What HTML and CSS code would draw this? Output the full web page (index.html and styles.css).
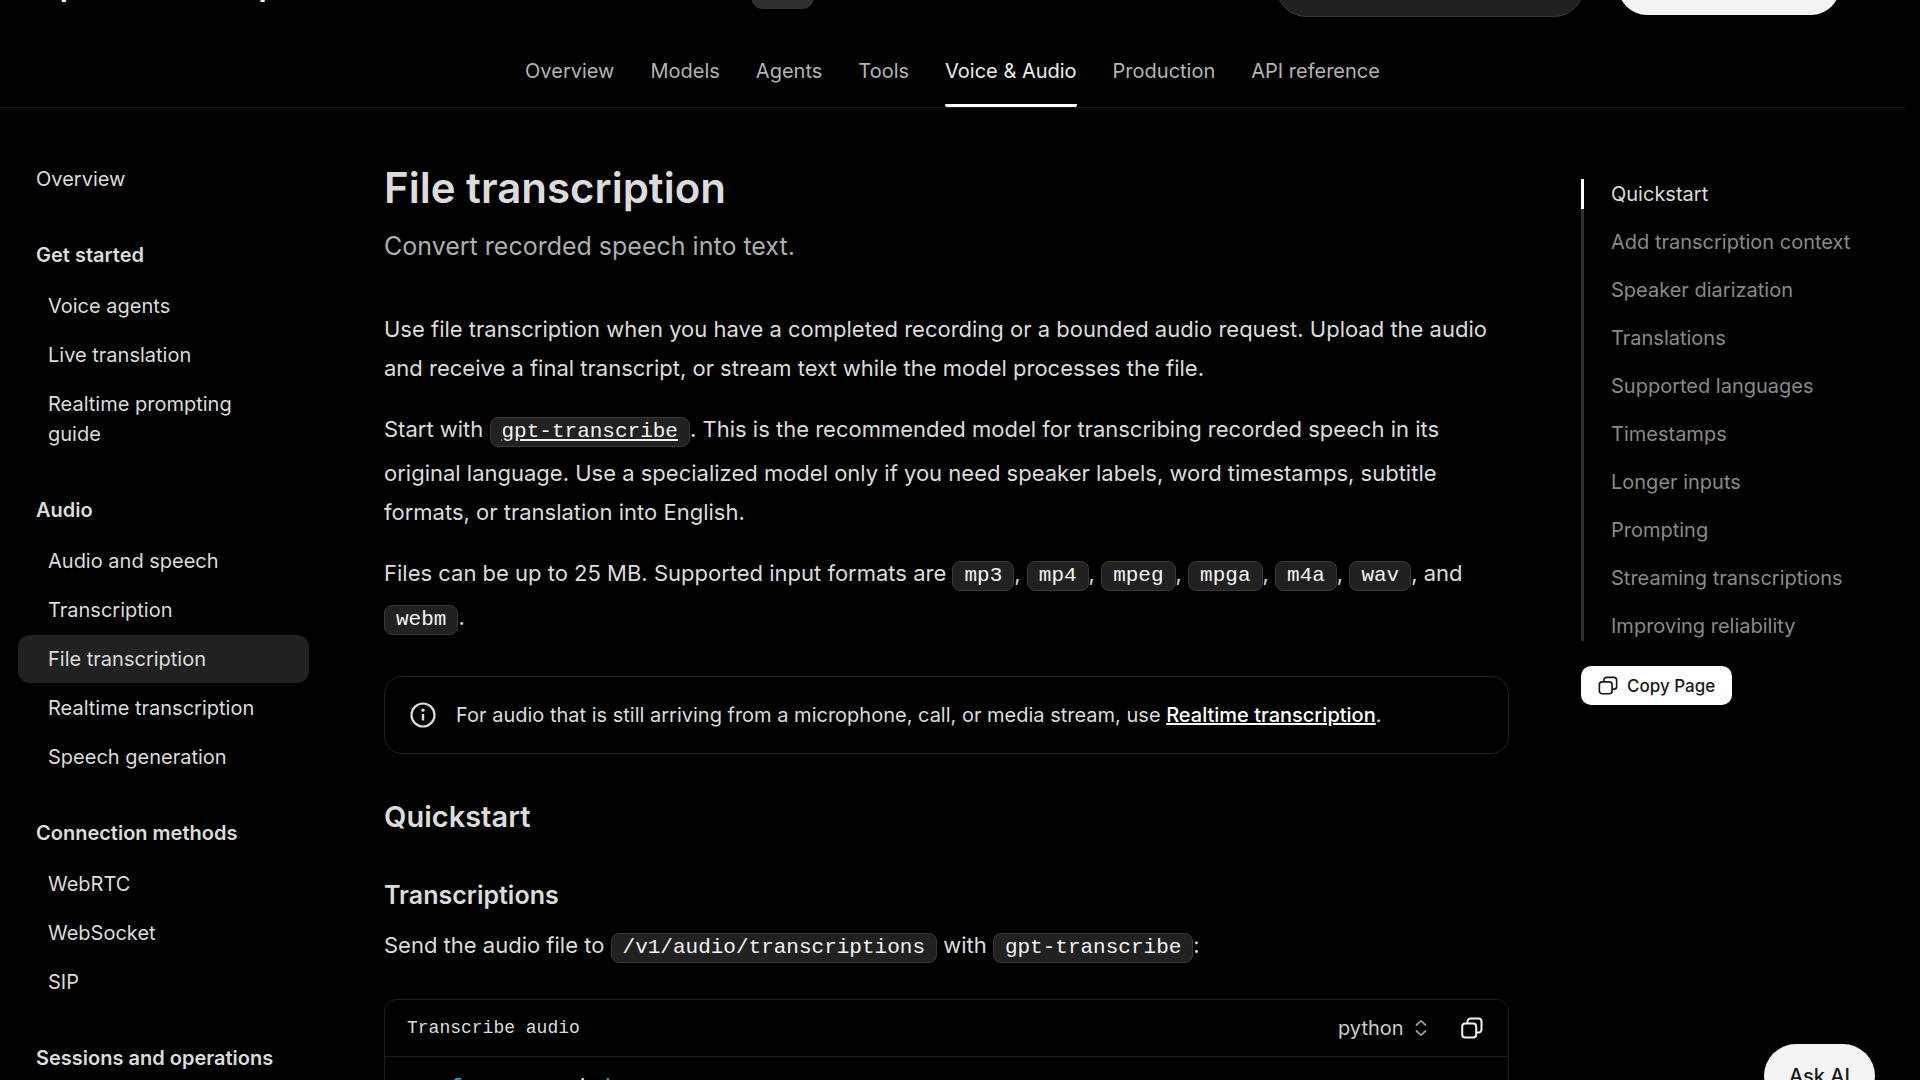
FILE: index.html
```html
<!DOCTYPE html>
<html lang="en">
<head>
    <meta charset="utf-8">
    <title>File transcription</title>
    <link rel="stylesheet" href="styles.css">
</head>
<body>
    <header>
        <div class="topbar">
            <a href="#" class="brand">OpenAI Developers</a>
            <button class="menu-btn" aria-label="Menu"></button>
            <button class="search-btn" aria-label="Search"></button>
            <button class="dashboard-btn" aria-label="Dashboard"></button>
        </div>
        <nav class="navigation">
            <a href="#">Overview</a>
            <a href="#">Models</a>
            <a href="#">Agents</a>
            <a href="#">Tools</a>
            <a href="#" class="active">Voice &amp; Audio</a>
            <a href="#">Production</a>
            <a href="#">API reference</a>
        </nav>
    </header>

    <div class="container">
        <aside class="sidebar">
            <a href="#" class="top-link">Overview</a>

            <h4>Get started</h4>
            <ul>
                <li><a href="#">Voice agents</a></li>
                <li><a href="#">Live translation</a></li>
                <li><a href="#">Realtime prompting guide</a></li>
            </ul>

            <h4>Audio</h4>
            <ul>
                <li><a href="#">Audio and speech</a></li>
                <li><a href="#">Transcription</a></li>
                <li><a href="#" class="active">File transcription</a></li>
                <li><a href="#">Realtime transcription</a></li>
                <li><a href="#">Speech generation</a></li>
            </ul>

            <h4>Connection methods</h4>
            <ul>
                <li><a href="#">WebRTC</a></li>
                <li><a href="#">WebSocket</a></li>
                <li><a href="#">SIP</a></li>
            </ul>

            <h4>Sessions and operations</h4>
        </aside>

        <main class="content">
            <h1>File transcription</h1>
            <p class="subtitle">Convert recorded speech into text.</p>

            <p>Use file transcription when you have a completed recording or a bounded audio request. Upload the audio and receive a final transcript, or stream text while the model processes the file.</p>
            <p>Start with <a href="#"><code>gpt-transcribe</code></a>. This is the recommended model for transcribing recorded speech in its original language. Use a specialized model only if you need speaker labels, word timestamps, subtitle formats, or translation into English.</p>
            <p>Files can be up to 25 MB. Supported input formats are <code>mp3</code>, <code>mp4</code>, <code>mpeg</code>, <code>mpga</code>, <code>m4a</code>, <code>wav</code>, and <code>webm</code>.</p>

            <div class="callout">
                <svg width="26" height="26" viewBox="0 0 26 26" fill="none" stroke="currentColor" stroke-width="2.2">
                    <circle cx="13" cy="13" r="11.5"/>
                    <path d="M13 12v6.5" stroke-width="2.4"/>
                    <circle cx="13" cy="8.2" r="1.6" fill="currentColor" stroke="none"/>
                </svg>
                <span>For audio that is still arriving from a microphone, call, or media stream, use <a href="#">Realtime transcription</a>.</span>
            </div>

            <h2>Quickstart</h2>
            <h3>Transcriptions</h3>
            <p>Send the audio file to <code>/v1/audio/transcriptions</code> with <code>gpt-transcribe</code>:</p>

            <div class="code-box">
                <div class="code-header">
                    <span class="code-title">Transcribe audio</span>
                    <div class="language">
                        <select aria-label="Language">
                            <option>python</option>
                        </select>
                        <svg width="12" height="18" viewBox="0 0 12 18" fill="none" stroke="currentColor" stroke-width="1.8" stroke-linecap="round" stroke-linejoin="round">
                            <path d="M1.5 6 6 1.8 10.5 6M1.5 12 6 16.2 10.5 12"/>
                        </svg>
                    </div>
                    <button class="copy-btn" aria-label="Copy code">
                        <svg width="22" height="22" viewBox="0 0 22 22" fill="none" stroke="currentColor" stroke-width="2">
                            <rect x="1.2" y="6.5" width="14" height="14" rx="3"/>
                            <path d="M6.5 6.5V4.5a3 3 0 0 1 3-3h8a3 3 0 0 1 3 3v8a3 3 0 0 1-3 3h-2"/>
                        </svg>
                    </button>
                </div>
                <pre><span class="keyword">from</span> openai <span class="keyword">import</span> <span class="name">OpenAI</span></pre>
            </div>
        </main>

        <aside class="toc">
            <ul>
                <li class="active"><a href="#">Quickstart</a></li>
                <li><a href="#">Add transcription context</a></li>
                <li><a href="#">Speaker diarization</a></li>
                <li><a href="#">Translations</a></li>
                <li><a href="#">Supported languages</a></li>
                <li><a href="#">Timestamps</a></li>
                <li><a href="#">Longer inputs</a></li>
                <li><a href="#">Prompting</a></li>
                <li><a href="#">Streaming transcriptions</a></li>
                <li><a href="#">Improving reliability</a></li>
            </ul>
            <button class="copy-page">
                <svg width="20" height="20" viewBox="0 0 22 22" fill="none" stroke="currentColor" stroke-width="1.8">
                    <rect x="1.5" y="6.5" width="14" height="13" rx="3"/>
                    <path d="M6.5 6.5V4.5a3 3 0 0 1 3-3h8a3 3 0 0 1 3 3v7a3 3 0 0 1-3 3h-2"/>
                </svg>
                Copy Page
            </button>
        </aside>
    </div>

    <button class="ask-ai">Ask AI</button>
</body>
</html>
```
FILE: styles.css
```css
* {
    box-sizing: border-box;
}

body {
    background-color: #000;
    color: #dcdcdc;
    font-family: Inter, "Liberation Sans", sans-serif;
    font-size: 20px;
    line-height: 30px;
    margin: 0 15px 0 0;
    height: 100vh;
    overflow: hidden;
}

a {
    color: inherit;
    text-decoration: none;
}

ul {
    list-style: none;
    margin: 0;
    padding: 0;
}

button {
    border: none;
    font-family: inherit;
    cursor: pointer;
}

/* header */
header {
    border-bottom: 1px solid #1c1c1c;
}

.topbar {
    display: grid;
    grid-template-columns: 8fr 63px 9fr 222px;
    align-items: end;
    height: 67px;
    margin-top: -50px;
    padding: 0 65px 0 36px;
}

.brand {
    font-size: 31px;
    font-weight: 600;
    line-height: 36px;
    color: #fff;
    margin-bottom: 14px;
}

.menu-btn {
    height: 40px;
    border-radius: 12px;
    background-color: #303030;
    margin-bottom: 8px;
}

.search-btn {
    width: 308px;
    height: 60px;
    justify-self: end;
    margin-right: 34px;
    border-radius: 30px;
    background-color: #212121;
    border: 1px solid #383838;
}

.dashboard-btn {
    height: 58px;
    border-radius: 29px;
    background-color: #f3f3f3;
    margin-bottom: 2px;
}

.navigation {
    display: flex;
    justify-content: center;
    gap: 36px;
    padding-top: 39px;
}

.navigation a {
    color: #b4b4b4;
    padding-bottom: 18px;
    border-bottom: 3px solid transparent;
}

.navigation a.active {
    color: #ededed;
    border-bottom-color: #fff;
    border-radius: 2px;
}

.container {
    display: grid;
    grid-template-columns: 294px minmax(0, 1fr) 306px;
    column-gap: 72px;
    padding: 0 18px;
}

/* left menu */
.sidebar {
    padding: 47px 3px 0 0;
}

.sidebar h4 {
    font-size: 20px;
    font-weight: 600;
    margin: 37px 18px 12px;
}

.sidebar ul {
    display: flex;
    flex-direction: column;
    gap: 1px;
}

.sidebar a {
    display: block;
    padding: 9px 30px;
    border-radius: 12px;
}

.sidebar a.top-link {
    padding: 9px 18px;
}

.sidebar a.active {
    background-color: #212121;
}

/* article */
.content {
    padding-top: 54px;
}

h1 {
    font-size: 42px;
    font-weight: 600;
    line-height: 52px;
    margin: 0 0 15px;
}

h2 {
    font-size: 29px;
    font-weight: 600;
    line-height: 36px;
    margin: 45px 0 44px;
}

h3 {
    font-size: 25px;
    font-weight: 600;
    line-height: 32px;
    margin: 0 0 15px;
}

.content p {
    font-size: 22px;
    line-height: 39px;
    margin: 0 0 22px;
}

.content p.subtitle {
    font-size: 25px;
    line-height: 34px;
    color: #afafaf;
    margin-bottom: 47px;
}

code {
    display: inline-block;
    font-family: "Liberation Mono", monospace;
    font-size: 21px;
    line-height: 28px;
    color: #f3f3f3;
    background-color: #212121;
    border: 1px solid #383838;
    border-radius: 8px;
    padding: 0 11px;
    margin-bottom: 7px;
}

p a code {
    text-decoration: underline;
}

.callout {
    display: flex;
    align-items: center;
    gap: 20px;
    padding: 23px 25px;
    margin-top: 34px;
    border: 1px solid #242424;
    border-radius: 18px;
}

.callout a {
    color: #fff;
    font-weight: 500;
    text-decoration: underline;
}

.code-box {
    margin-top: 29px;
    border: 1px solid #1e1e1e;
    border-radius: 12px 12px 0 0;
}

.code-header {
    display: flex;
    align-items: center;
    height: 57px;
    padding: 0 25px 0 22px;
    border-bottom: 1px solid #1e1e1e;
}

.code-title {
    flex: 1;
    font-family: "Liberation Mono", monospace;
    font-size: 18px;
}

.language {
    display: flex;
    align-items: center;
    gap: 11px;
    color: #9a9a9a;
}

.language select {
    appearance: none;
    border: none;
    padding: 0;
    background: none;
    color: #cdcdcd;
    font-family: inherit;
    font-size: 20px;
}

.copy-btn {
    display: flex;
    padding: 0;
    margin-left: 34px;
    background: none;
    color: #f3f3f3;
}

pre {
    margin: 0;
    padding: 13px 65px;
    font-family: "Liberation Mono", monospace;
    font-size: 21px;
    line-height: 36px;
    color: #f3f3f3;
}

.keyword {
    color: #4ba3d9;
}

.name {
    color: #b4b4b4;
}

/* right menu */
.toc {
    padding-top: 71px;
}

.toc ul {
    display: flex;
    flex-direction: column;
    gap: 18px;
    background: linear-gradient(#303030, #303030) left / 3px 100% no-repeat;
}

.toc li {
    padding-left: 27px;
    border-left: 3px solid transparent;
    color: #8a8a8a;
}

.toc li.active {
    color: #dcdcdc;
    border-left-color: #fff;
}

.copy-page {
    display: flex;
    align-items: center;
    gap: 9px;
    height: 39px;
    margin-top: 25px;
    padding: 0 17px;
    border-radius: 10px;
    background-color: #fff;
    color: #181818;
    font-size: 17px;
    font-weight: 500;
}

.ask-ai {
    position: fixed;
    right: 45px;
    bottom: -28px;
    height: 64px;
    padding: 0 25px;
    border-radius: 32px;
    background-color: #f3f3f3;
    color: #181818;
    font-size: 20px;
    font-weight: 500;
}
```
